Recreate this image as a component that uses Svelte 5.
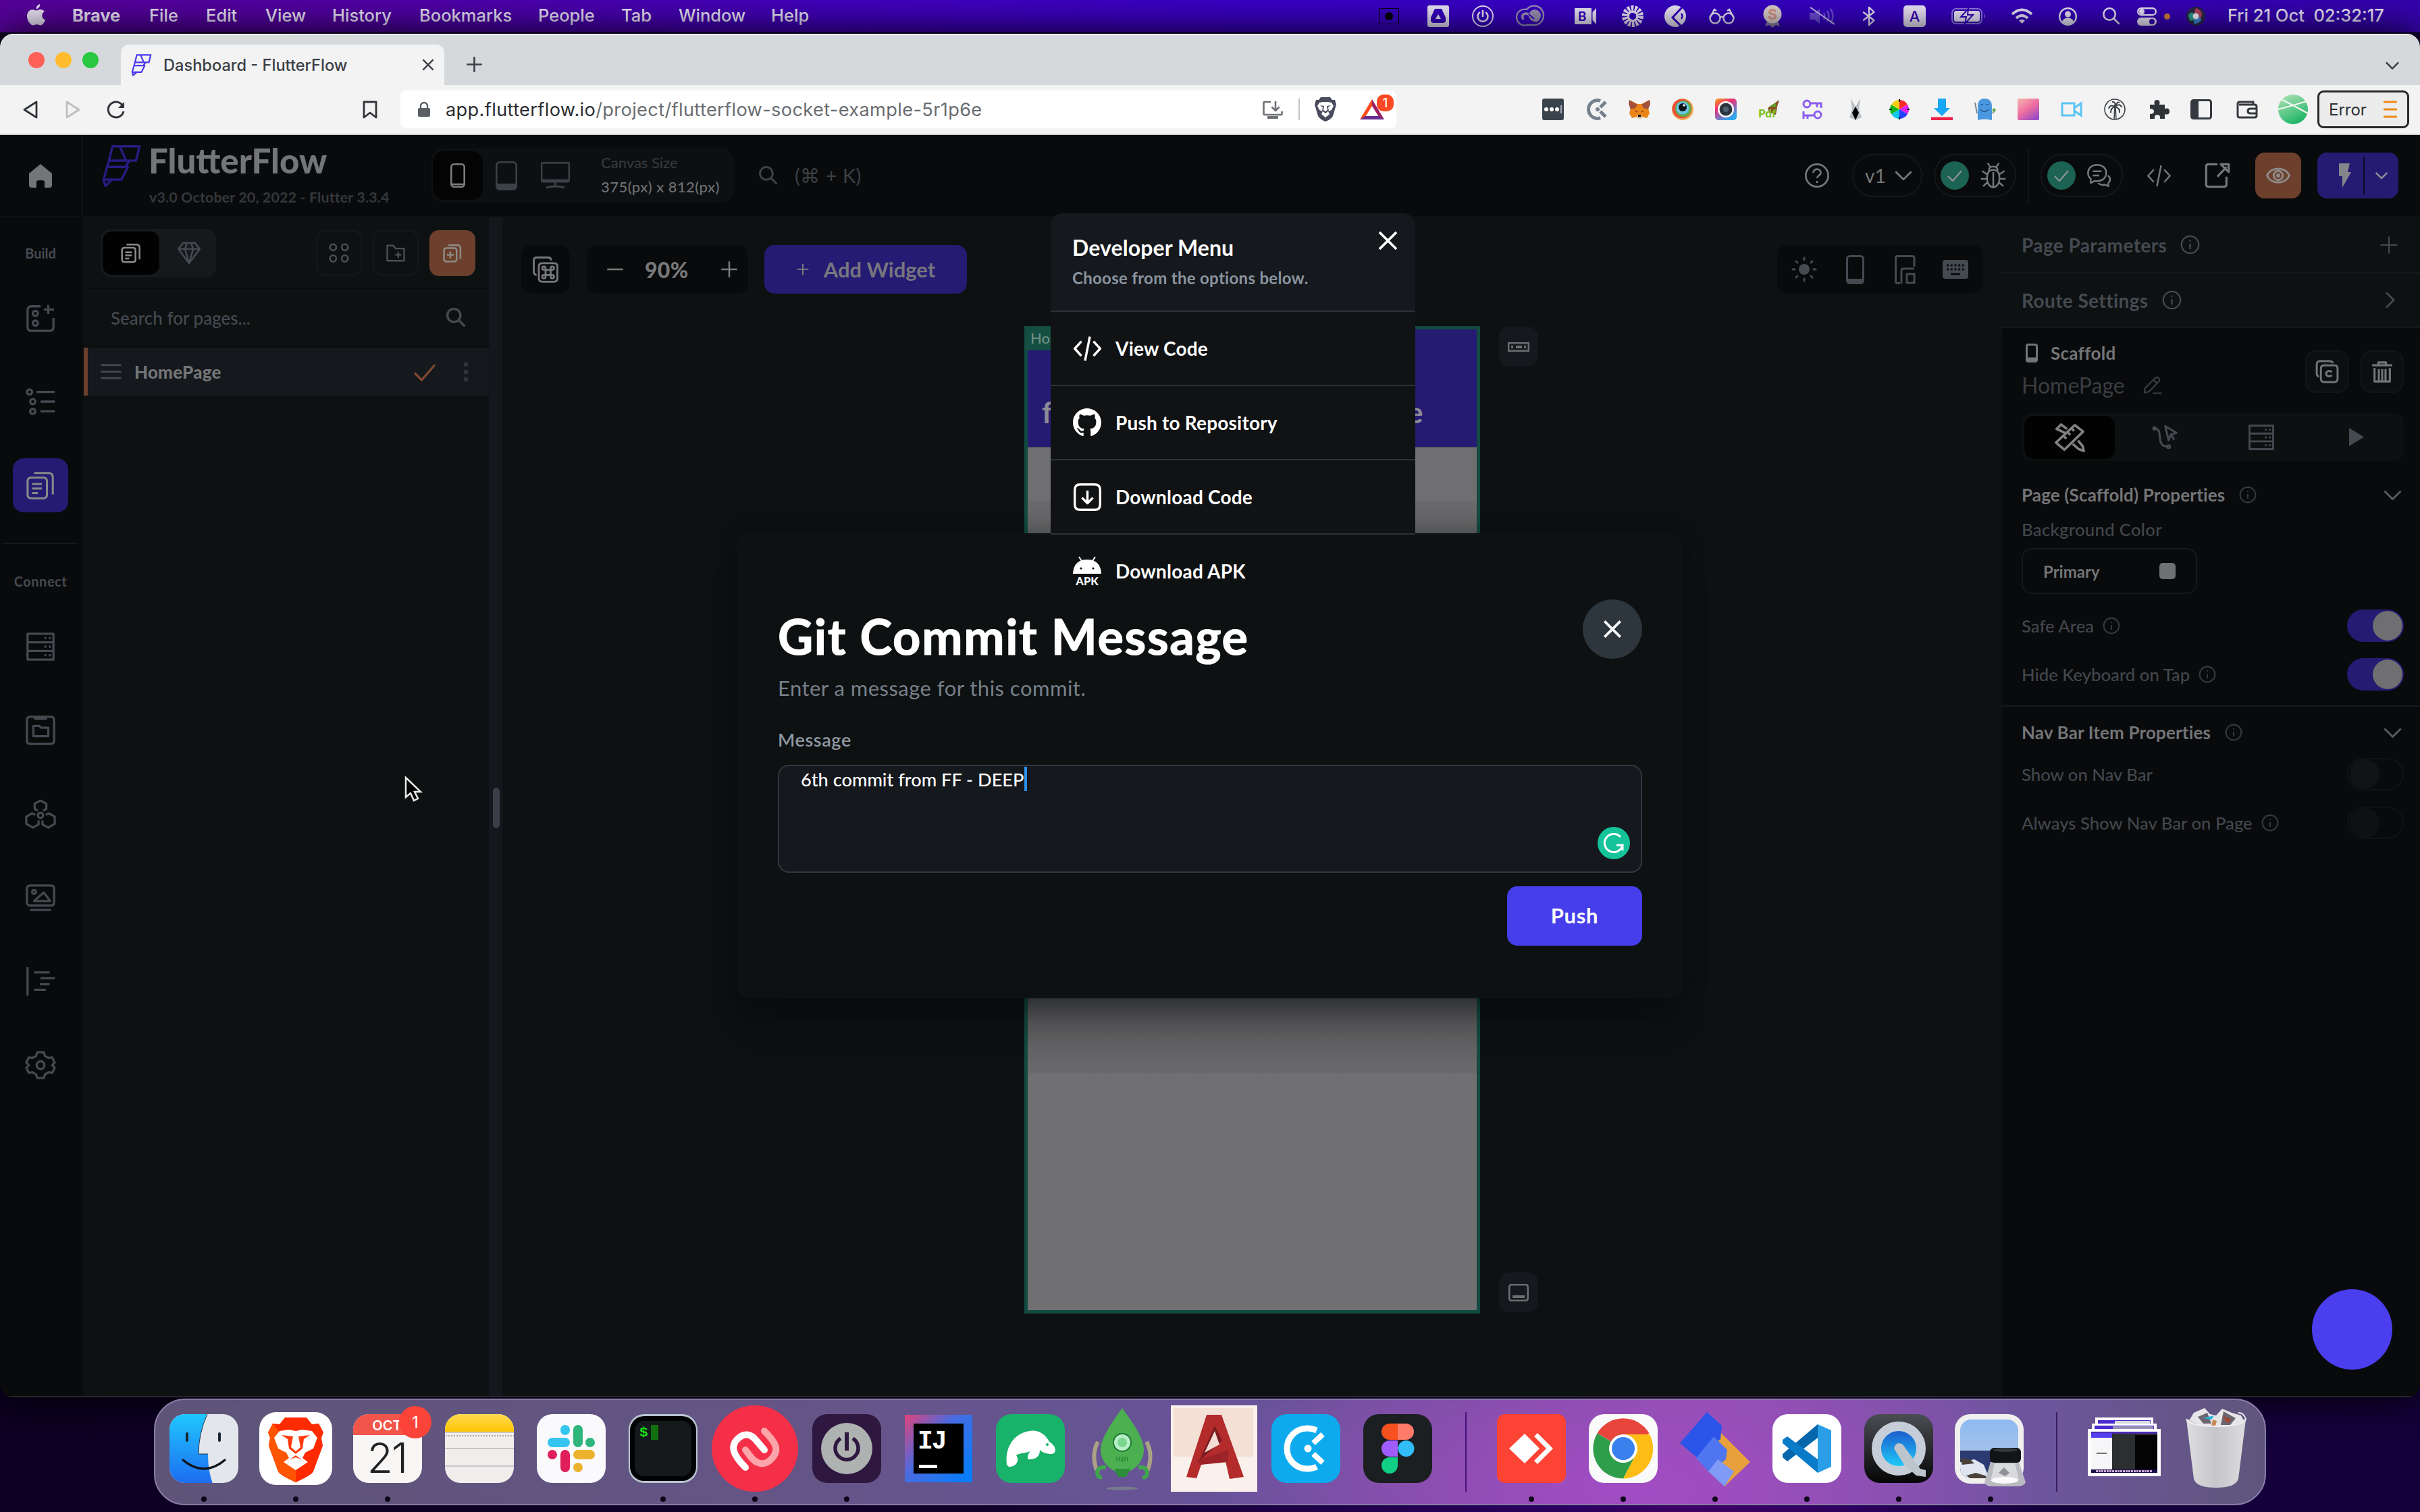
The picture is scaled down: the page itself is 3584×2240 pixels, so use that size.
<script>
  const menus = ['File', 'Edit', 'View', 'History', 'Bookmarks', 'People', 'Tab', 'Window', 'Help'];

  // Stroke icons on a 24 x 24 grid.
  const strokes = {
    close: 'M5 5L19 19M19 5L5 19',
    plus: 'M12 2V22M2 12H22',
    minus: 'M2 12H22',
    down: 'M2 7L12 17L22 7',
    right: 'M7 2L17 12L7 22',
    check: 'M2 13L9 20L22 5',
    search: 'M9.5 2A7.5 7.5 0 1 0 9.5 17A7.5 7.5 0 1 0 9.5 2M15 15L22 22',
    info: 'M12 1.5A10.5 10.5 0 1 0 12 22.5A10.5 10.5 0 1 0 12 1.5M12 11V17.5M12 6.5V8',
    help: 'M12 1.5A10.5 10.5 0 1 0 12 22.5A10.5 10.5 0 1 0 12 1.5M8.5 9.5C8.5 5 15.5 5 15.5 9.5C15.5 12 12 12 12 14.5M12 17V19',
    code: 'M7 6L1.5 12L7 18M17 6L22.500 12L17 18M14 2L10 22',
    burger: 'M1 5H23M1 12H23M1 19H23',
    pages: 'M4 6H14Q17 6 17 9V19Q17 22 14 22H5Q2 22 2 19V9Q2 6 5 6M7 2.500H18Q21.500 2.500 21.500 6V19M5.500 11H13M5.500 14.500H13M5.500 18H10',
    gem: 'M6 2H18L22.500 8L12 22L1.500 8ZM1.500 8H22.500M8 8L12 22L16 8L14 2M10 2L8 8',
    grid: 'M5.500 2A3.500 3.500 0 1 0 5.500 9A3.500 3.500 0 1 0 5.500 2M18.500 2A3.500 3.500 0 1 0 18.500 9A3.500 3.500 0 1 0 18.500 2M5.500 14.500A3.500 3.500 0 1 0 5.500 21.500A3.500 3.500 0 1 0 5.500 14.500M18.500 14.500A3.500 3.500 0 1 0 18.500 21.500A3.500 3.500 0 1 0 18.500 14.500',
    folderAdd: 'M2 3H9L12 6.500H22V21H2ZM15 10.500V17.500M11.500 14H18.500',
    pageAdd: 'M5 6H14Q17 6 17 9V19Q17 22 14 22H5Q2 22 2 19V9Q2 6 5 6M7 2.500H18Q21.500 2.500 21.500 6V19M9.500 10V18M5.500 14H13.500',
    widget: 'M12 3H5Q2 3 2 6V19Q2 22 5 22H19Q22 22 22 19V12M18 2V9M14.500 5.500H22.500M8 6.500A2 2 0 1 0 8 10.500A2 2 0 1 0 8 6.500M8 14A2 2 0 1 0 8 18A2 2 0 1 0 8 14',
    tree: 'M9 4.500H23M12 12H23M12 19.500H23M3.500 2.500A2 2 0 1 0 3.500 6.500A2 2 0 1 0 3.500 2.500M6 10A2 2 0 1 0 6 14A2 2 0 1 0 6 10M6 17.500A2 2 0 1 0 6 21.500A2 2 0 1 0 6 17.500',
    db: 'M2 2H22V22H2ZM2 8.700H22M2 15.300H22M15 5.300H16.500M18.500 5.300H20M15 12H16.500M18.500 12H20M15 18.600H16.500M18.500 18.600H20',
    folderBox: 'M4 1.500H20Q22.500 1.500 22.500 4V20Q22.500 22.500 20 22.500H4Q1.500 22.500 1.500 20V4Q1.500 1.500 4 1.500M7 3H17M6.500 8.500H11L12.500 10H18V16.500H6.500Z',
    hex: 'M12 1.500L16.500 4V8L14 9.500M10 9.500L7.500 8V4L12 1.500M8 12.500L5.500 11.500L1 14V19.500L6 22.500L10.500 20V17M16 12.500L18.500 11.500L23 14V19.500L18 22.500L13.500 20V17M12 11A2 2 0 1 0 12 15A2 2 0 1 0 12 11',
    image: 'M4 2.500H20Q22.500 2.500 22.500 5V15.500Q22.500 18 20 18H4Q1.500 18 1.500 15.500V5Q1.500 2.500 4 2.500M4 21.500H20M7 14.500L14.500 8L19.500 14.500ZM7 6A1.500 1.500 0 1 0 7 9A1.500 1.500 0 1 0 7 6',
    align: 'M2 1V23M7 5H19M12 9.500H23M11.500 14H19M7 18.500H16',
    gear: 'M9.500 2H14.500L15.500 5L18.500 6.500L21 6L23 10L21 12L23 14L21 18L18.500 17.500L15.500 19L14.500 22H9.500L8.500 19L5.500 17.500L3 18L1 14L3 12L1 10L3 6L5.500 6.500L8.500 5ZM12 9A3 3 0 1 0 12 15A3 3 0 1 0 12 9',
    bug: 'M12 7C7 7 6.500 11 6.500 15C6.500 19 9 22.500 12 22.500C15 22.500 17.500 19 17.500 15C17.500 11 17 7 12 7M12 9V22M8 7.500Q8 4 12 4Q16 4 16 7.500M9 4L7 1M15 4L17 1M6.500 11L2 8M17.500 11L22 8M6.500 15H1M17.500 15H23M7 18L3 21.500M17 18L21 21.500',
    chat: 'M10 2C4 2 1.500 6 1.500 9.500C1.500 12 2.500 14 4 15V19L8 17C15 18 18.500 14 18.500 9.500C18.500 5 15 2 10 2M6 8H14M6 12H12M20 12C23 14 22.500 17.500 20.500 19V22L17 20.500C14 21.500 12 20 11 19',
    copy: 'M8 6H19Q22 6 22 9V19Q22 22 19 22H9Q6 22 6 19V9Q6 6 9 6M4 17Q2 16 2 14V5Q2 2 5 2H14Q17 2 17.500 4M16.500 12.500C14.500 10.500 11 11.500 11 14C11 16.500 14.500 17.500 16.500 15.500',
    trash: 'M1.500 5H22.500M8 4V2H16V4M4 8V22H20V8M8.500 9V21M12 9V21M15.500 9V21',
    pencil: 'M2 21.500L3 16L15 4Q17 2.500 19 4Q21 6 19.500 8L8 20L2 21.500M12 22H23M13 6L17.500 10.500',
    design: 'M1.500 16L16 2.500L22.500 7.500L8 21.500ZM13.500 5L15.500 7M10.500 8L12.500 10M7.500 11L9.500 13M8.500 8.500L2 5.500L5.500 2L10 5.500M14.500 17L19 21L23 22.500L22 18.500L18.500 14.500',
    flow: 'M3.500 4C12 4 4 20 14.500 20M13 2L23 8L18 9.500L16 14.500ZM18.500 10L21 14M3.500 3A1 1 0 1 0 3.500 5A1 1 0 1 0 3.500 3M16 19A1.200 1.200 0 1 0 16 21.500A1.200 1.200 0 1 0 16 19',
    cmd: 'M9 6.500H19.500Q22.500 6.500 22.500 9.500V20Q22.500 23 19.500 23H9Q6 23 6 20V9.500Q6 6.500 9 6.500M4 17Q1.500 17 1.500 14V4Q1.500 1.500 4 1.500H14Q17 1.500 17 4M12 12.500H16.500V17H12ZM12 12.500V11A1.500 1.500 0 1 0 10.500 12.500ZM16.500 12.500H18A1.500 1.500 0 1 0 16.500 11ZM12 17H10.500A1.500 1.500 0 1 0 12 18.500ZM16.500 17V18.500A1.500 1.500 0 1 0 18 17Z',
    external: 'M12 2H4Q2 2 2 4V20Q2 22 4 22H18Q20 22 20 20V13M12 13L20 4.500M15 2H22V9Z',
    download: 'M6 1.500H18Q22.500 1.500 22.500 6V18Q22.500 22.500 18 22.500H6Q1.500 22.500 1.500 18V6Q1.500 1.500 6 1.500M12 6.500V17M7.500 12.500L12 17L16.500 12.500',
    eye: 'M1 12C5 3 19 3 23 12C19 21 5 21 1 12ZM12 7.500A4.500 4.500 0 1 0 12 16.500A4.500 4.500 0 1 0 12 7.500M12 11A1 1 0 1 0 12 13A1 1 0 1 0 12 11',
    flutter: 'M7 1H22L20 9H5ZM11 1L14.500 9M5 9L4 12.500H14L16.500 9M4 12.500L2 19.500H12L15.500 12.500ZM2 19.500L3 23L7 19.500',
    bluetooth: 'M5 7L18 17L12 22.500V1.500L18 7L5 17'
  };

  const railBuild = ['widget', 'tree'];
  const railConnect = ['db', 'folderBox', 'hex', 'image', 'align', 'gear'];

  const devItems = [
    { icon: 'code', label: 'View Code' },
    { icon: 'github', label: 'Push to Repository' },
    { icon: 'download', label: 'Download Code' },
    { icon: 'apk', label: 'Download APK' }
  ];

  const dockLeft = [
    ['finder', true], ['brave', true], ['calendar', true], ['notes', false], ['slack', false],
    ['terminal', true], ['authy', true], ['power', true], ['intellij', false], ['tableplus', false],
    ['rocket', false], ['autocad', false], ['clockify', false], ['figma', false]
  ];
  const dockMiddle = [
    ['anydesk', true], ['chrome', true], ['testflow', true], ['vscode', true], ['quicktime', true], ['preview', true]
  ];
  const dockRight = [['stack', false], ['trash', false]];

  let message = $state('6th commit from FF - DEEP');
</script>

{#snippet icon(name, size, width = 2)}
  <svg class="ic" width={size} height={size} viewBox="0 0 24 24" fill="none" stroke="currentColor" stroke-width={width} stroke-linejoin="round"><path d={strokes[name]} /></svg>
{/snippet}

{#snippet github()}
  <svg class="ic" width="42" height="42" viewBox="0 0 16 16" fill="currentColor"><path d="M8 0C3.580 0 0 3.580 0 8c0 3.540 2.290 6.530 5.470 7.590.4.070.550-.170.550-.380 0-.190-.010-.820-.010-1.490-2.010.370-2.530-.490-2.690-.940-.090-.230-.480-.940-.820-1.130-.280-.150-.680-.520-.010-.530.630-.010 1.080.580 1.230.820.720 1.210 1.870.870 2.330.660.070-.520.280-.870.510-1.070-1.780-.2-3.640-.890-3.640-3.950 0-.870.310-1.590.820-2.150-.080-.2-.360-1.020.080-2.120 0 0 .670-.210 2.200.820.640-.180 1.320-.270 2-.270s1.360.090 2 .270c1.530-1.040 2.200-.820 2.200-.820.440 1.100.160 1.920.080 2.120.510.560.820 1.270.820 2.150 0 3.070-1.870 3.750-3.650 3.950.290.250.540.730.540 1.480 0 1.070-.010 1.930-.010 2.200 0 .210.150.460.550.380A8.010 8.010 0 0 0 16 8c0-4.420-3.580-8-8-8z" /></svg>
{/snippet}

{#snippet apk()}
  <svg class="ic" width="42" height="44" viewBox="0 0 42 44">
    <path d="M13 7L9 1M29 7L33 1" fill="none" stroke="#fff" stroke-width="2" />
    <path d="M0 26Q1 5 21 5Q41 5 42 26Z" fill="#fff" /><circle cx="12" cy="18" r="1.600" fill="#111" /><circle cx="30" cy="18" r="1.600" fill="#111" />
    <text x="21" y="43" text-anchor="middle" font-family="Lato, sans-serif" font-weight="900" font-size="16.500" fill="#fff">APK</text>
  </svg>
{/snippet}

{#snippet dockIcon(name)}
  {#if name === 'finder'}
    <svg width="104" height="104" viewBox="0 0 104 104"><defs><linearGradient id="fb" x1="0" y1="0" x2="0" y2="1"><stop offset="0" stop-color="#1fc8fd" /><stop offset="1" stop-color="#1d6cf2" /></linearGradient><clipPath id="fc"><rect x="1" y="1" width="102" height="102" rx="23" /></clipPath></defs><g clip-path="url(#fc)"><rect width="104" height="104" fill="#e3e7ec" /><path d="M57 0Q44 30 44 60H58Q58 85 65 104H0V0Z" fill="url(#fb)" /></g><path d="M27 30V40M75 30V40" stroke="#1a2533" stroke-width="4" stroke-linecap="round" /><path d="M57 1Q44 30 44 60H58" fill="none" stroke="#25364b" stroke-width="1" /><path d="M21 69Q52 95 83 69" fill="none" stroke="#10151c" stroke-width="3.500" stroke-linecap="round" /></svg>
  {:else if name === 'brave'}
    <svg width="108" height="108" viewBox="0 0 108 108"><rect width="108" height="108" rx="25" fill="#fff" /><path d="M38 8H70L78 18L88 17L95 30L92 38L94 50L80 88Q78 93 54 104Q30 93 28 88L14 50L16 38L13 30L20 17L30 18Z" fill="#ff2a00" /><path d="M54 104Q30 93 28 88L14 50L16 38L13 30L20 17L54 60Z" fill="#ff5500" /><path d="M30 28L44 26L54 28L64 26L78 28L86 38L80 54L68 60L64 68L72 74L54 86L36 74L44 68L40 60L28 54L22 38Z" fill="#fff" /><path d="M33 34L50 36L47 52L54 58L61 52L58 36L75 34L66 40L64 54L54 62L44 54L42 40ZM40 74L54 64L68 74L62 70L54 67L46 70Z" fill="#ff3a0c" /></svg>
  {:else if name === 'calendar'}
    <svg width="104" height="104" viewBox="0 0 104 104"><defs><clipPath id="cc"><rect x="1" y="1" width="102" height="102" rx="23" /></clipPath></defs><g clip-path="url(#cc)"><rect width="104" height="104" fill="#f7f6f5" /><rect width="104" height="32" fill="#f25549" /></g><text x="51" y="25" text-anchor="middle" font-family="Inter, sans-serif" font-weight="600" font-size="20" fill="#fff">OCT</text><text x="51" y="88" text-anchor="middle" font-family="Inter, sans-serif" font-weight="300" font-size="62" letter-spacing="-2" fill="#222">21</text></svg>
    <span class="badge">1</span>
  {:else if name === 'notes'}
    <svg width="104" height="104" viewBox="0 0 104 104"><defs><clipPath id="nc"><rect x="1" y="1" width="102" height="102" rx="23" /></clipPath><linearGradient id="ny" x1="0" y1="0" x2="0" y2="1"><stop offset="0" stop-color="#ffdc55" /><stop offset="1" stop-color="#fdc400" /></linearGradient></defs><g clip-path="url(#nc)"><rect width="104" height="104" fill="#f0eeec" /><rect width="104" height="27" fill="url(#ny)" /><path d="M0 28H104M0 52H104M0 78H104" stroke="#c8c6c6" stroke-width="2" /><path d="M2 33H104" stroke="#a9a49e" stroke-width="2" stroke-dasharray="2 2" /></g></svg>
  {:else if name === 'slack'}
    <svg width="104" height="104" viewBox="0 0 104 104"><rect x="1" y="1" width="102" height="102" rx="23" fill="#fafafc" /><g stroke-width="14" stroke-linecap="round" fill="none"><path d="M24 43H43M43 24V25" stroke="#36c5f0" /><path d="M62 24V43M80 43V43.100" stroke="#2eb67d" /><path d="M62 61H80M62 80V80.100" stroke="#ecb22e" /><path d="M43 61V80M24 61V61.100" stroke="#e01e5a" /></g></svg>
  {:else if name === 'terminal'}
    <svg width="104" height="104" viewBox="0 0 104 104"><rect x="1" y="1" width="102" height="102" rx="23" fill="#b9c4cf" /><rect x="3" y="4" width="98" height="96" rx="21" fill="#020203" /><rect x="10" y="11" width="84" height="82" rx="14" fill="#15191b" /><text x="17" y="34" font-family="Liberation Mono, monospace" font-weight="700" font-size="21" fill="#12e012">$</text><rect x="34" y="17" width="11" height="22" fill="#11700f" /></svg>
  {:else if name === 'authy'}
    <svg width="128" height="128" viewBox="0 0 128 128"><circle cx="64" cy="64" r="64" fill="#f52f48" /><path d="M78 38C98 58 100 68 88 80C78 90 66 88 56 74L50 66" fill="none" stroke="#fba4aa" stroke-width="10" stroke-linecap="round" /><path d="M50 92C30 72 28 60 38 50C48 40 58 42 66 52L78 66" fill="none" stroke="#fff" stroke-width="10" stroke-linecap="round" /></svg>
  {:else if name === 'power'}
    <svg width="102" height="102" viewBox="0 0 102 102"><rect width="102" height="102" rx="22" fill="#2f1840" /><circle cx="51" cy="51" r="38" fill="#aeb2b1" /><path d="M51 27V54" stroke="#2f1840" stroke-width="6" /><path d="M42 36A17 17 0 1 0 60 36" fill="none" stroke="#2f1840" stroke-width="5.500" /></svg>
  {:else if name === 'intellij'}
    <svg width="100" height="100" viewBox="0 0 100 100"><defs><linearGradient id="ij" x1="0" y1="0" x2="1" y2=".8"><stop offset="0" stop-color="#e0447a" /><stop offset=".45" stop-color="#4a6be0" /><stop offset="1" stop-color="#087cfa" /></linearGradient></defs><rect width="100" height="100" fill="url(#ij)" /><rect x="13" y="13" width="74" height="74" fill="#000" /><text x="19" y="50" font-family="Liberation Mono, monospace" font-weight="700" font-size="38" letter-spacing="-2" fill="#fff">IJ</text><rect x="21" y="74" width="27" height="5" fill="#fff" /></svg>
  {:else if name === 'tableplus'}
    <svg width="104" height="104" viewBox="0 0 104 104"><rect x="1" y="1" width="102" height="102" rx="23" fill="#19b26b" /><path d="M17 76C14 52 26 32 46 27C62 22 74 30 80 42C90 48 92 58 84 60C76 60 70 58 66 54C66 64 60 68 50 68C46 68 48 60 52 56C42 60 36 58 31 62C37 70 30 80 20 79Z" fill="#fff" /><circle cx="77" cy="46" r="2" fill="#19b26b" /></svg>
  {:else if name === 'rocket'}
    <svg width="92" height="124" viewBox="0 0 92 124"><path d="M10 52Q0 70 8 94M82 52Q92 70 84 94" fill="none" stroke="#aaa283" stroke-width="6" /><path d="M46 2C24 32 14 50 14 64C14 82 30 98 46 98C62 98 78 82 78 64C78 50 68 32 46 2Z" fill="#4caf50" /><path d="M34 92H58L52 104H40Z" fill="#2c8e3b" /><circle cx="46" cy="53" r="13" fill="#b9efc6" stroke="#1c7a36" stroke-width="2" /><circle cx="46" cy="53" r="7" fill="#7ad68f" /><path d="M38 74V80M42 74V81M46 74V82M50 74V81M54 74V80" stroke="#2c8e3b" stroke-width="2" /><path d="M22 90Q10 88 9 98Q10 106 16 104M70 90Q82 88 83 98Q82 106 76 104" fill="none" stroke="#3fa64d" stroke-width="6" /><ellipse cx="46" cy="121" rx="24" ry="2.500" fill="#77798c" /></svg>
  {:else if name === 'autocad'}
    <svg width="128" height="128" viewBox="0 0 128 128"><rect width="128" height="128" fill="#faf0ec" /><path d="M4 4H122V76H4Z" fill="#f5e0d6" /><path d="M53 14H75L108 106L87 109L80 79L45 88L38 108L23 106Z" fill="#b42b2c" /><path d="M65 30L42 82L76 52Z" fill="#7c1c22" /><path d="M65 38L50 70L72 58Z" fill="#f2ddd4" /><path d="M38 82L86 66L84 84L44 88Z" fill="#9c2327" /></svg>
  {:else if name === 'clockify'}
    <svg width="104" height="104" viewBox="0 0 104 104"><rect x="1" y="1" width="102" height="102" rx="23" fill="#0dabee" /><path d="M68 25Q60 22 54 22A30 30 0 0 0 54 82Q62 82 68 79" fill="none" stroke="#fff" stroke-width="9" /><circle cx="55" cy="52" r="5.500" fill="#fff" /><path d="M63 44L77 31M63 60L77 73" stroke="#fff" stroke-width="8" /></svg>
  {:else if name === 'figma'}
    <svg width="104" height="104" viewBox="0 0 104 104"><rect x="1" y="1" width="102" height="102" rx="23" fill="#1c1f21" /><path d="M52 15H40A12 12 0 0 0 40 39H52Z" fill="#f8501f" /><path d="M52 15H64A12 12 0 0 1 64 39H52Z" fill="#ff7a68" /><path d="M52 40H40A12 12 0 0 0 40 64H52Z" fill="#a15cff" /><circle cx="64.500" cy="52" r="12" fill="#32bcf8" /><path d="M52 65H40A12 12 0 1 0 52 77Z" fill="#10ce83" /></svg>
  {:else if name === 'anydesk'}
    <svg width="102" height="102" viewBox="0 0 102 102"><rect width="102" height="102" rx="12" fill="#fd4334" /><path d="M41 29L63 51L41 73L18 51Z" fill="#fff" /><path d="M55 33L60 28L83 51L60 74L55 69L73 51Z" fill="#fff" /></svg>
  {:else if name === 'chrome'}
    <svg width="104" height="104" viewBox="0 0 104 104"><rect x="1" y="1" width="102" height="102" rx="23" fill="#fafafa" /><path d="M52 52L13.500 29.500A44.500 44.500 0 0 1 90.500 29.500Z" fill="#e8453c" /><path d="M33 41L13.500 29.500A44.500 44.500 0 0 0 52 96.500L70 62Z" fill="#2f9e4a" /><path d="M52 31H91A44.500 44.500 0 0 1 52 96.500L70 62Z" fill="#fdbd14" /><circle cx="52" cy="52" r="21" fill="#fff" /><circle cx="52" cy="52" r="17" fill="#3a81ee" /></svg>
  {:else if name === 'testflow'}
    <svg width="104" height="112" viewBox="0 0 104 112"><path d="M58 30L104 76L66 112L44 90Z" fill="#e8a03c" /><path d="M40 2L62 22L60 42L26 70L0 48Z" fill="#2b55e8" /><path d="M50 38L70 58L68 72L44 92L24 70Z" fill="#4f76f0" /><path d="M56 72L80 90L66 112L42 90Z" fill="#7f9bf5" /></svg>
  {:else if name === 'vscode'}
    <svg width="104" height="104" viewBox="0 0 104 104"><rect x="1" y="1" width="102" height="102" rx="23" fill="#fff" /><path d="M68 16V36L23 71L16 65V60Z" fill="#0566ab" /><path d="M68 88L16 44V39L23 34L68 68Z" fill="#0a7bc9" /><path d="M68 16L88 25V79L68 88Z" fill="#2a9fe8" /></svg>
  {:else if name === 'quicktime'}
    <svg width="104" height="104" viewBox="0 0 104 104"><defs><linearGradient id="qb" x1="0" y1="0" x2="0" y2="1"><stop offset="0" stop-color="#4a4d52" /><stop offset="1" stop-color="#060607" /></linearGradient><linearGradient id="qi" x1="0" y1="0" x2="0" y2="1"><stop offset="0" stop-color="#1b50c8" /><stop offset="1" stop-color="#20d8ff" /></linearGradient></defs><rect x="1" y="1" width="102" height="102" rx="23" fill="url(#qb)" /><circle cx="52" cy="52" r="33" fill="url(#qi)" stroke="#c5ced8" stroke-width="14" /><path d="M45 52Q48 40 58 46L84 82L92 84V94L78 92L60 76Z" fill="#bcc4cc" /></svg>
  {:else if name === 'preview'}
    <svg width="108" height="112" viewBox="0 0 108 112"><defs><linearGradient id="sky" x1="0" y1="0" x2="0" y2="1"><stop offset="0" stop-color="#8db9f2" /><stop offset="1" stop-color="#b7c8e2" /></linearGradient></defs><rect x="1" y="5" width="102" height="103" rx="23" fill="#f1f0ee" /><rect x="9" y="13" width="86" height="87" rx="16" fill="url(#sky)" /><path d="M9 59H95V100H24Q9 98 9 84Z" fill="#2c3a72" /><path d="M9 76L30 72L44 80L52 100H24Q9 98 9 84Z" fill="#dfe6f2" /><path d="M9 70L24 72L30 78L12 80ZM18 96L32 92L46 96L50 100H24Z" fill="#4b4138" /><path d="M54 76H96L106 106Q104 112 92 112H58Q46 112 45 106Z" fill="#b9bbc0" /><path d="M60 78H90L96 102Q76 96 54 104Z" fill="#d9dadd" /><ellipse cx="75" cy="103" rx="20" ry="5" fill="#fafafa" /><path d="M66 92L74 84L82 92L76 97Z" fill="#8e9095" /><rect x="53" y="55" width="46" height="22" rx="6" fill="#131415" /><ellipse cx="76" cy="58" rx="18" ry="3" fill="#33363a" /></svg>
  {:else if name === 'stack'}
    <svg width="108" height="96" viewBox="0 0 108 96"><rect x="11" y="2" width="86" height="30" fill="#fff" /><rect x="15" y="6" width="78" height="6" fill="#4a2bd0" /><rect x="40" y="7" width="52" height="4" fill="#d9d9e0" /><rect x="6" y="11" width="96" height="30" fill="#fff" /><rect x="10" y="14" width="88" height="5" fill="#4a2bd0" /><rect x="37" y="15" width="60" height="4" fill="#9a93b8" /><rect y="19" width="108" height="70" fill="#fff" /><rect x="5" y="23" width="98" height="61" fill="#2c2e30" /><rect x="5" y="23" width="98" height="3" fill="#4a2bb0" /><rect x="5" y="27" width="31" height="52" fill="#f6f6f8" /><rect x="5" y="25" width="31" height="7" fill="#5540f0" /><path d="M13 55H28" stroke="#444" stroke-width="1.500" /><rect x="70" y="28" width="33" height="51" fill="#040404" /><rect x="5" y="79" width="98" height="5" fill="#1c0d48" /><path d="M12 81.500H96" stroke="#c8a7d0" stroke-width="3" stroke-dasharray="3 1" /></svg>
  {:else}
    <svg width="94" height="122" viewBox="0 0 94 122"><defs><linearGradient id="bin" x1="0" y1="0" x2="1" y2="0"><stop offset="0" stop-color="#dedde0" /><stop offset=".5" stop-color="#c6c5c9" /><stop offset="1" stop-color="#dcdbde" /></linearGradient></defs><path d="M3 18H91L80 106Q76 119 47 119Q18 119 14 106Z" fill="url(#bin)" /><path d="M8 18L14 8L30 1L38 10L47 12L56 2L70 8L84 12L88 20L70 27H24Z" fill="#e6e6e8" /><path d="M20 14L34 8L40 24H28ZM58 6L76 16L68 26H54Z" fill="#6b6670" /><path d="M28 16L44 12L40 18Z" fill="#25b2d8" /><path d="M56 12L70 18L64 24Z" fill="#a04438" /><path d="M42 18L48 20L46 28H40Z" fill="#c98a56" /><path d="M3 17Q6 28 47 28Q88 28 91 17Q88 8 80 8" fill="none" stroke="#efeff2" stroke-width="2" /></svg>
  {/if}
{/snippet}

{#snippet dockSlots(items)}
  {#each items as [name, running]}
    <div class="slot">
      {@render dockIcon(name)}
      {#if running}<i class="run"></i>{/if}
    </div>
  {/each}
{/snippet}

<div class="desktop">
  <header class="menubar">
    <div class="menus">
      <svg class="apple" width="27" height="32" viewBox="0 0 27 32" fill="#ece4f8"><path d="M19 0Q19.500 6 13.500 7.500Q13.500 2 19 0M13.800 9.500C16 9.500 17 8 20 8C22 8 24.500 9 26 11C20.500 14 21.500 21.500 27 23.500C25.500 28 22.500 31.500 20 31.500C18 31.500 17 30.300 14.500 30.300C12 30.300 11 31.500 9 31.500C5 31.500 0 24 0 18C0 12 4 8.200 8 8.200C10.500 8.200 12 9.500 13.800 9.500" /></svg>
      <b>Brave</b>
      {#each menus as m}<span>{m}</span>{/each}
    </div>
    <div class="status">
      <svg width="30" height="24" viewBox="0 0 30 24"><rect x="0.500" y="0.500" width="29" height="23" rx="1" fill="none" stroke="#05001c" stroke-width="1.200" /><circle cx="15" cy="12" r="6" fill="#000" /></svg>
      <svg width="32" height="32" viewBox="0 0 32 32"><rect width="32" height="32" rx="3" fill="#ece6fa" /><path d="M11 5H21L27 18V24L24 26H8L5 24V18Z" fill="#3700c4" /><path d="M16 13L20 20H12Z" fill="#ece6fa" /></svg>
      <svg width="32" height="32" viewBox="0 0 32 32" fill="none" stroke="#ece6fa" stroke-width="2"><circle cx="16" cy="16" r="15" /><path d="M16 7V17M12 10A7.500 7.500 0 1 0 20 10" stroke-width="2.600" /></svg>
      <svg width="40" height="30" viewBox="0 0 40 30" fill="none"><path d="M14 28A12 12 0 1 1 13 5A14 14 0 0 1 38 14A14 14 0 0 1 25 28Z" stroke="#9b92b8" stroke-width="2.400" /><circle cx="25" cy="14" r="9" fill="#9b92b8" /><path d="M8 20Q4 12 12 11Q15 11 18 15L24 21Q28 23 30 20" stroke="#9b92b8" stroke-width="3.500" /><path d="M16 12L24 19" stroke="#3700c4" stroke-width="2" /></svg>
      <svg width="34" height="26" viewBox="0 0 34 26"><rect y="1" width="25" height="24" rx="1" fill="#ece6fa" /><path d="M26.500 7L32 1V25L26.500 19Z" fill="#ece6fa" /><text x="5" y="19.500" font-family="Inter, sans-serif" font-weight="600" font-size="19" fill="#3700c4">B</text></svg>
      <svg width="32" height="32" viewBox="0 0 32 32" fill="none"><circle cx="16" cy="16" r="10.500" stroke="#ece6fa" stroke-dasharray="3.200 1.512" stroke-width="11" /><circle cx="16" cy="16" r="7" stroke="#ece6fa" stroke-width="3" /></svg>
      <svg width="32" height="32" viewBox="0 0 32 32"><circle cx="16" cy="16" r="16" fill="#ece6fa" /><path d="M26 3L12 18L24 30" fill="none" stroke="#3700c4" stroke-width="3" /><path d="M25 12Q28 16 25 20" fill="none" stroke="#3700c4" stroke-width="2.400" /></svg>
      <svg width="38" height="24" viewBox="0 0 38 24" fill="none" stroke="#ece6fa" stroke-width="2.400"><circle cx="9" cy="15" r="7.500" /><circle cx="29" cy="15" r="7.500" /><path d="M16.500 14Q19 11.500 21.500 14M1.500 14L8 2L11 4M36.500 14L30 2L27 4" /></svg>
      <svg width="30" height="34" viewBox="0 0 30 34"><path d="M8 22L4 32L10 30L15 34L20 30L26 32L22 22Z" fill="#8e86a8" /><circle cx="15" cy="14" r="13.500" fill="#dcd2d0" /><text x="15" y="22" text-anchor="middle" font-family="Inter, sans-serif" font-weight="800" font-size="21" fill="#d69a8a">S</text></svg>
      <svg width="40" height="28" viewBox="0 0 40 28"><path d="M1 9H8L16 3V25L8 19H1Z" fill="#6b4bd6" /><path d="M22 9Q25 14 22 19M27 6Q32 14 27 22M32 3Q39 14 32 25" fill="none" stroke="#6b4bd6" stroke-width="2.500" /><path d="M2 1L38 26" stroke="#cfc4f0" stroke-width="2" /></svg>
      <span class="bt">{@render icon('bluetooth', 30, 1.800)}</span>
      <svg width="33" height="32" viewBox="0 0 33 32"><rect width="33" height="32" rx="5" fill="#ece6fa" /><text x="16.500" y="24" text-anchor="middle" font-family="Inter, sans-serif" font-weight="500" font-size="22" fill="#3700b8">A</text></svg>
      <svg width="51" height="24" viewBox="0 0 51 24"><rect x="1" y="1" width="44" height="22" rx="6" fill="none" stroke="#8f77e2" stroke-width="2" /><rect x="4" y="4" width="38" height="16" rx="3" fill="#ece6fa" /><path d="M48 8Q51 12 48 16Z" fill="#8f77e2" /><path d="M25 1L14 13H22L20 23L32 10H24Z" fill="#ece6fa" stroke="#3400b8" stroke-width="2" /></svg>
      <svg width="33" height="24" viewBox="0 0 33 24" fill="none" stroke="#ece6fa" stroke-width="4"><path d="M2 9Q16.500 -4 31 9M8 15Q16.500 7 25 15" /><path d="M12 18.500Q16.500 15 21 18.500L16.500 23Z" fill="#ece6fa" stroke="none" /></svg>
      <svg width="27" height="27" viewBox="0 0 27 27"><circle cx="13.500" cy="13.500" r="12.300" fill="none" stroke="#ece6fa" stroke-width="2.400" /><circle cx="13.500" cy="10" r="4.500" fill="#ece6fa" /><path d="M5 21Q7 15.500 13.500 15.500Q20 15.500 22 21Q18 25 13.500 25Q9 25 5 21" fill="#ece6fa" /></svg>
      <span>{@render icon('search', 28, 2.200)}</span>
      <svg width="29" height="27" viewBox="0 0 29 27"><rect x="1.200" y="1.200" width="26.600" height="10" rx="5" fill="none" stroke="#ece6fa" stroke-width="2.400" /><circle cx="7" cy="6.200" r="4" fill="#ece6fa" /><rect y="15" width="29" height="12" rx="6" fill="#ece6fa" /><circle cx="22" cy="21" r="4" fill="#3400b8" /></svg>
      <svg width="9" height="9" viewBox="0 0 8 8"><circle cx="4" cy="4" r="4" fill="#d9803c" /></svg>
      <svg width="28" height="28" viewBox="0 0 28 28"><circle cx="14" cy="14" r="14" fill="#2b2748" /><path d="M14 2Q26 6 22 16Q17 16 14 14Q10 9 14 2" fill="#b0405e" /><path d="M3 12Q8 4 14 14Q12 22 6 21Q3 17 3 12" fill="#2b9a8f" /><path d="M14 14Q22 14 22 20Q17 26 11 25Q10 20 14 14" fill="#3f86d8" /><circle cx="14" cy="14" r="4.500" fill="#f3f3fa" /></svg>
      <time>Fri 21 Oct&nbsp; 02:32:17</time>
    </div>
  </header>

  <main class="window">
    <div class="tabstrip">
      <div class="lights"><i class="red"></i><i class="yellow"></i><i class="green"></i></div>
      <div class="tab">
        <span class="fav">{@render icon('flutter', 33, 1.600)}</span>
        <span class="tabtitle">Dashboard - FlutterFlow</span>
        {@render icon('close', 26, 2.200)}
      </div>
      <span class="newtab">{@render icon('plus', 27, 2.400)}</span>
      <span class="tabsearch">{@render icon('down', 22, 2.800)}</span>
    </div>

    <div class="toolbar">
      <div class="nav">
        <svg width="22" height="27" viewBox="0 0 22 27" fill="none" stroke="#30343a" stroke-width="2.800" stroke-linejoin="round"><path d="M20 2V25L2 13.500Z" /></svg>
        <svg width="22" height="27" viewBox="0 0 22 27" fill="none" stroke="#bcbfc2" stroke-width="2.800" stroke-linejoin="round"><path d="M2 2V25L20 13.500Z" /></svg>
        <svg width="28" height="27" viewBox="0 0 28 27" fill="none" stroke="#30343a" stroke-width="3"><path d="M25 16A11.500 11.500 0 1 1 23 6.500" /><path d="M26 2V11H17Z" fill="#30343a" stroke="none" /></svg>
        <svg width="22" height="27" viewBox="0 0 22 27" fill="none" stroke="#30343a" stroke-width="2.800" stroke-linejoin="round"><path d="M2 2H20V25L11 18L2 25Z" /></svg>
      </div>
      <div class="address">
        <svg width="18" height="22" viewBox="0 0 18 22"><rect y="9" width="18" height="13" rx="2" fill="#5b5f63" /><path d="M4 10V6A5 5 0 0 1 14 6V10" fill="none" stroke="#5b5f63" stroke-width="2.400" /></svg>
        <span class="url"><em>app.flutterflow.io</em>/project/flutterflow-socket-example-5r1p6e</span>
        <div class="addricons">
          <svg width="30" height="27" viewBox="0 0 30 27" fill="none" stroke="#6c6f73" stroke-width="2.600"><path d="M12 2H3Q1.500 2 1.500 4V19Q1.500 21 3 21H27Q28.500 21 28.500 19V16M19 1V15M13.500 9.500L19 15L24.500 9.500" /><path d="M7 25H23" stroke-width="4" /></svg>
          <i class="vline"></i>
          <svg width="32" height="36" viewBox="0 0 32 36"><path d="M9 0H23L26 4L30 4L32 11L27 28Q24 33 16 36Q8 33 5 28L0 11L2 4L6 4Z" fill="#4a4c5e" /><path d="M7 8L13 7H19L25 8L28 13L25 19L20 21L22 25L16 30L10 25L12 21L7 19L4 13Z" fill="#fff" /><path d="M8 12L14 13L13 19L16 21L19 19L18 13L24 12L20 15L21 20L16 24L11 20L12 15Z" fill="#4a4c5e" /></svg>
          <span class="bat"><svg width="36" height="30" viewBox="0 0 36 30"><path d="M18 0L18 10L8 26L0 30Z" fill="#ff4a1c" /><path d="M18 0L36 30L28 26L18 10Z" fill="#9e1f63" /><path d="M0 30L8 25H28L36 30Z" fill="#662d91" /></svg><b>1</b></span>
        </div>
      </div>
      <div class="exts">
        <svg width="32" height="32" viewBox="0 0 32 32"><rect width="32" height="32" rx="3" fill="#3a444d" /><circle cx="6" cy="16" r="3" fill="#fff" /><circle cx="14" cy="16" r="3" fill="#fff" /><circle cx="22" cy="16" r="3" fill="#fff" /><path d="M28 10V22" stroke="#ccd" stroke-width="1.500" /></svg>
        <svg width="30" height="32" viewBox="0 0 30 32" fill="none" stroke="#75818c" stroke-width="5"><path d="M20 3.500Q18 2.500 16 2.500A13.500 13.500 0 0 0 16 29.500Q18 29.500 20 28.500M20 13L28 5M20 19L28 27" /><circle cx="16" cy="16" r="3" fill="#75818c" stroke="none" /></svg>
        <svg width="32" height="32" viewBox="0 0 32 32"><path d="M1 2L13 8H19L31 2L29 14L31 22L27 29L20 27L18 30H14L12 27L5 29L1 22L3 14Z" fill="#ea8518" /><path d="M1 2L13 9L10 14L3 16L0 8ZM31 2L19 9L22 14L29 16L32 8Z" fill="#a1503a" /><path d="M10 18L13 20M22 18L19 20" stroke="#a14e22" stroke-width="2" /><path d="M12 25H20L18 30H14Z" fill="#d8c4b4" /><path d="M14 24H18V27H14Z" fill="#111" /></svg>
        <svg width="32" height="32" viewBox="0 0 32 32"><circle cx="16" cy="16" r="16" fill="#f0b25c" /><circle cx="15" cy="15" r="14.500" fill="#ee4f3a" /><circle cx="17" cy="15" r="12" fill="#5cae4a" /><circle cx="16" cy="14" r="9.500" fill="#6cc6e6" /><circle cx="16" cy="13" r="6" fill="#0c1318" /><circle cx="18" cy="10" r="1.800" fill="#fff" /></svg>
        <svg width="32" height="32" viewBox="0 0 32 32"><defs><linearGradient id="cam" x1="0" y1="0" x2=".6" y2="1"><stop offset="0" stop-color="#f7a414" /><stop offset=".4" stop-color="#ee2f78" /><stop offset="1" stop-color="#2aa9f0" /></linearGradient></defs><rect width="32" height="32" rx="5" fill="url(#cam)" /><circle cx="16" cy="16" r="12" fill="#fff" /><circle cx="16" cy="16" r="9.500" fill="#2c3640" /><circle cx="16" cy="16" r="4" fill="#4e6270" /></svg>
        <svg width="32" height="32" viewBox="0 0 32 32"><path d="M31 2L14 14L16 20L26 24L28 12Z" fill="#8b4a24" /><path d="M16 12L26 6L27 13Z" fill="#5f9c26" /><text x="0" y="28" font-family="Lato, sans-serif" font-weight="900" font-size="17" fill="#7cc021">Pdf</text></svg>
        <svg width="30" height="30" viewBox="0 0 30 30" fill="none" stroke="#8a5cf0" stroke-width="3"><circle cx="7" cy="7" r="5" /><path d="M12 6H28V13M22 6V12" /><circle cx="23" cy="23" r="5" /><path d="M18 24H2M2 18V29M8 24V29" /></svg>
        <svg width="18" height="32" viewBox="0 0 18 32"><path d="M2 0L9 12L16 0L14 16L18 28L9 32L0 28L4 16Z" fill="#b9bec4" /><path d="M9 12L14 21L9 32L4 21Z" fill="#000" /></svg>
        <svg width="30" height="30" viewBox="0 0 30 30"><path d="M15 15V1A14 14 0 0 1 27 8Z" fill="#ff2a2a" /><path d="M15 15L27 8A14 14 0 0 1 27 22Z" fill="#e020f0" /><path d="M15 15L27 22A14 14 0 0 1 15 29Z" fill="#2440ff" /><path d="M15 15V29A14 14 0 0 1 3 22Z" fill="#12c8e8" /><path d="M15 15L3 22A14 14 0 0 1 3 8Z" fill="#14b81c" /><path d="M15 15L3 8A14 14 0 0 1 15 1Z" fill="#f4ce10" /><path d="M15 0V4M15 26V30M0 15H4M26 15H30" stroke="#111" stroke-width="2" /></svg>
        <svg width="32" height="32" viewBox="0 0 32 32"><path d="M10 0H22V14H28L16 26L4 14H10Z" fill="#1aa7f5" /><path d="M0 27.500H32V32H0Z" fill="#ed2148" /></svg>
        <svg width="32" height="32" viewBox="0 0 32 32"><path d="M5 32V12Q5 0 15 0Q26 0 26 12V32Q15 29 5 32Z" fill="#4a97df" /><path d="M1 6L4 22M27 22L31 16" stroke="#789" stroke-width="2" /><path d="M9 16Q15 23 21 16M9 9H13M17 9H21" fill="none" stroke="#245b96" stroke-width="1.500" /><circle cx="29" cy="17" r="2.500" fill="#5caf48" /></svg>
        <svg width="32" height="32" viewBox="0 0 32 32"><defs><linearGradient id="pk" x1="0" y1="0" x2=".7" y2="1"><stop offset="0" stop-color="#f6b7b0" /><stop offset=".55" stop-color="#ee6da0" /><stop offset="1" stop-color="#9c4dc4" /></linearGradient></defs><rect width="32" height="32" rx="2" fill="url(#pk)" /></svg>
        <svg width="32" height="22" viewBox="0 0 32 22" fill="none" stroke="#5cc4f5" stroke-width="3"><path d="M2 2H20V20H2ZM20 9L30 2V20L20 13" /></svg>
        <svg width="32" height="32" viewBox="0 0 32 32" fill="none" stroke="#3d4146" stroke-width="1.600"><circle cx="16" cy="16" r="15" /><path d="M15 31L16 13M18 31L17 13" /><path d="M16 12Q9 8 7 15M16 12Q10 14 10 21M16 12Q18 4 12 5M16 12Q24 6 26 13M16 12Q24 14 23 21M16 12Q20 4 23 6" stroke-width="2" /></svg>
        <svg width="31" height="30" viewBox="0 0 31 30" fill="#2f3439"><path d="M2 8H9Q7 1 12.500 1Q18 1 16 8H24V14Q31 12 31 18Q31 24 24 22V29H17Q18 23 13 23Q8 23 9 29H2V22Q8 22 8 18Q8 14 2 14Z" /></svg>
        <svg width="32" height="30" viewBox="0 0 32 30"><rect x="1.500" y="1.500" width="29" height="27" rx="3" fill="none" stroke="#34393f" stroke-width="3" /><rect x="2" y="2" width="10" height="26" fill="#34393f" /></svg>
        <svg width="32" height="27" viewBox="0 0 32 27" fill="none" stroke="#34393f" stroke-width="3"><path d="M25 5V2H5Q2 2 2 5V22Q2 25 5 25H27Q30 25 30 22V9Q30 6 27 6H4M30 12H21Q17 12 17 15.500Q17 19 21 19H30" /></svg>
        <svg width="44" height="44" viewBox="0 0 44 44"><defs><linearGradient id="av" x1="0" y1="0" x2=".5" y2="1"><stop offset="0" stop-color="#b5e4ba" /><stop offset="1" stop-color="#23b768" /></linearGradient></defs><circle cx="22" cy="22" r="22" fill="url(#av)" /><path d="M0 22L22 16L42 10M6 8L22 16L44 28" fill="none" stroke="#f5f8f5" stroke-width="2" /></svg>
        <div class="error">Error<svg width="20" height="26" viewBox="0 0 20 26" stroke="#ef8a16" stroke-width="3"><path d="M0 2H20M0 13H20M0 24H20" /></svg></div>
      </div>
    </div>

    <section class="app">
      <div class="appbar">
        <div class="home"><svg width="34" height="35" viewBox="0 0 34 35" fill="#747577"><path d="M17 0L34 14V31Q34 35 30 35H23V26Q23 24 17 24Q11 24 11 26V35H4Q0 35 0 31V14Z" /></svg></div>
        <div class="logo">{@render icon('flutter', 64, 1.300)}</div>
        <div class="brand"><strong>FlutterFlow</strong><small>v3.0 October 20, 2022 - Flutter 3.3.4</small></div>
        <div class="devices">
          <div class="dev on"><svg width="22" height="36" viewBox="0 0 22 36" fill="none" stroke="#7b7c7e" stroke-width="2.600"><rect x="1.300" y="1.300" width="19.400" height="33.400" rx="4" /><path d="M2 31H20" /></svg></div>
          <svg width="32" height="43" viewBox="0 0 32 43" fill="none" stroke="#3c4147" stroke-width="2.600"><rect x="1.300" y="1.300" width="29.400" height="40.400" rx="5" /><path d="M2 37H30" stroke-width="8" /></svg>
          <svg width="43" height="40" viewBox="0 0 43 40" fill="none" stroke="#3c4147" stroke-width="2.400"><rect x="1.200" y="1.200" width="40.600" height="27" rx="1" /><path d="M2 28H41" stroke-width="5" /><path d="M21.500 30V37M8 38Q21 34 35 38" stroke-width="3" /></svg>
          <div class="size"><span>Canvas Size</span><b>375(px) x 812(px)</b></div>
        </div>
        <div class="find">{@render icon('search', 30, 2.400)}<span>(⌘ + K)</span></div>
        <div class="actions">
          {@render icon('help', 38, 1.700)}
          <div class="pill ver">v1 {@render icon('down', 28, 2.400)}</div>
          <div class="pill"><i class="ok">{@render icon('check', 24, 2.200)}</i>{@render icon('bug', 40, 1.500)}</div>
          <i class="sep"></i>
          <div class="pill"><i class="ok">{@render icon('check', 24, 2.200)}</i>{@render icon('chat', 38, 1.600)}</div>
          <span class="codebtn">{@render icon('code', 37, 1.600)}</span>
          <span class="ext">{@render icon('external', 40, 1.900)}</span>
          <div class="sq orange">{@render icon('eye', 36, 2)}</div>
          <div class="run-btn"><svg width="20" height="36" viewBox="0 0 20 36" fill="#85858b"><path d="M2 0H18L15 13H20L7 36V19H2Z" /></svg><i></i>{@render icon('down', 20, 3.200)}</div>
        </div>
      </div>

      <div class="body">
        <nav class="rail">
          <div class="railhead">Build</div>
          {#each railBuild as r}<div class="rbtn">{@render icon(r, 46, 1.700)}</div>{/each}
          <div class="rbtn"><div class="ractive">{@render icon('pages', 46, 1.600)}</div></div>
          <i class="rline"></i>
          <div class="railhead two">Connect</div>
          {#each railConnect as r}<div class="rbtn">{@render icon(r, 46, 1.700)}</div>{/each}
        </nav>

        <aside class="pages">
          <div class="ptools">
            <div class="seg"><span class="segon">{@render icon('pages', 32, 1.900)}</span><span class="segoff">{@render icon('gem', 36, 1.700)}</span></div>
            <div class="sq line">{@render icon('grid', 32, 1.900)}</div>
            <div class="sq line">{@render icon('folderAdd', 30, 1.900)}</div>
            <div class="sq orange small">{@render icon('pageAdd', 30, 2)}</div>
          </div>
          <div class="psearch"><span>Search for pages...</span>{@render icon('search', 31, 2.600)}</div>
          <div class="prow">
            <span class="grip">{@render icon('burger', 33, 2)}</span>
            <b>HomePage</b>
            <span class="tick">{@render icon('check', 36, 2.200)}</span>
            <svg width="8" height="30" viewBox="0 0 8 30" fill="#303338"><circle cx="4" cy="4" r="3.500" /><circle cx="4" cy="15" r="3.500" /><circle cx="4" cy="26" r="3.500" /></svg>
          </div>
        </aside>
        <div class="gutter"><i></i></div>

        <section class="canvas">
          <div class="ctools">
            <div class="chip cmd">{@render icon('cmd', 40, 1.700)}</div>
            <div class="chip zoom">{@render icon('minus', 28, 2.200)}<b>90%</b>{@render icon('plus', 28, 2.200)}</div>
            <button class="add">{@render icon('plus', 20, 2.600)}Add Widget</button>
            <div class="chip view">
              <svg width="38" height="38" viewBox="0 0 38 38" stroke="#454a51" stroke-width="3" stroke-linecap="round"><circle cx="19" cy="19" r="8" fill="#454a51" stroke="none" /><path d="M19 2V5M19 33V36M2 19H5M33 19H36M7 7L9 9M29 29L31 31M7 31L9 29M29 9L31 7" /></svg>
              <svg width="27" height="43" viewBox="0 0 27 43" fill="none" stroke="#454a51" stroke-width="3"><rect x="1.500" y="1.500" width="24" height="40" rx="4" /><path d="M2 38H25" stroke-width="6" /></svg>
              <svg class="twophones" width="31" height="43" viewBox="0 0 31 43" fill="none" stroke="#454a51" stroke-width="3"><path d="M29 17V4Q29 1.500 26 1.500H4Q1.500 1.500 1.500 4V39Q1.500 41.500 4 41.500H8M10 42V23Q10 20 13 20H29M18 42V28H29V41H18" /></svg>
              <svg width="38" height="28" viewBox="0 0 38 28"><rect width="38" height="28" rx="4" fill="#454a51" /><path d="M6 8H32M6 14H32" stroke="#0a0b0c" stroke-width="3" stroke-dasharray="3 2.700" /><path d="M12 21H26" stroke="#0a0b0c" stroke-width="3" /></svg>
            </div>
          </div>

          <div class="device">
            <span class="tag">HomePage</span>
            <div class="dbar">flutterflow-socket-example</div>
            <div class="dbody"></div>
          </div>
          <div class="side top"><svg width="32" height="14" viewBox="0 0 32 14" fill="none" stroke="#6d6e71" stroke-width="2.500"><rect x="1.200" y="1.200" width="29.600" height="11.600" /><path d="M5 7H8M12 7H21M24 7H27" stroke-width="4" /></svg></div>
          <div class="side bottom"><svg width="30" height="26" viewBox="0 0 30 26" fill="none" stroke="#6d6e71" stroke-width="2.600"><rect x="1.300" y="1.300" width="27.400" height="23.400" rx="3" /><path d="M6 19H24" stroke-width="4" /></svg></div>
        </section>

        <aside class="props">
          <div class="prop head">Page Parameters {@render icon('info', 29, 1.900)}<span class="end">{@render icon('plus', 30, 1.700)}</span></div>
          <div class="prop head second">Route Settings {@render icon('info', 29, 1.900)}<span class="end">{@render icon('right', 27, 2.400)}</span></div>
          <div class="inspector">
            <div class="scaffold">
              <div class="names">
                <div class="kind"><svg width="18" height="28" viewBox="0 0 18 28" fill="none" stroke="#737476" stroke-width="3"><rect x="1.500" y="1.500" width="15" height="25" rx="2.500" /><path d="M2 23H16" stroke-width="5" /></svg>Scaffold</div>
                <div class="pname">HomePage {@render icon('pencil', 30, 1.700)}</div>
              </div>
              <div class="sbtn">{@render icon('copy', 37, 1.900)}</div>
              <div class="sbtn">{@render icon('trash', 34, 2.200)}</div>
            </div>
            <div class="tabs">
              <span class="tabon">{@render icon('design', 46, 1.900)}</span>
              <span class="ta">{@render icon('flow', 40, 1.800)}</span>
              <span class="tb">{@render icon('db', 42, 1.600)}</span>
              <span class="tc"><svg width="22" height="27" viewBox="0 0 22 27" fill="#454a50"><path d="M0 0L22 13.500L0 27Z" /></svg></span>
            </div>
            <div class="row title">Page (Scaffold) Properties {@render icon('info', 26, 1.900)}<span class="end">{@render icon('down', 29, 2.200)}</span></div>
            <div class="row bg">Background Color</div>
            <div class="select">Primary<i></i></div>
            <div class="row tall first">Safe Area {@render icon('info', 26, 1.900)}<span class="toggle on"></span></div>
            <div class="row tall">Hide Keyboard on Tap {@render icon('info', 26, 1.900)}<span class="toggle on"></span></div>
            <div class="row title nav2">Nav Bar Item Properties {@render icon('info', 26, 1.900)}<span class="end">{@render icon('down', 29, 2.200)}</span></div>
            <div class="row tall">Show on Nav Bar<span class="toggle"></span></div>
            <div class="row tall">Always Show Nav Bar on Page {@render icon('info', 26, 1.900)}<span class="toggle dim"></span></div>
          </div>
        </aside>
      </div>
    </section>
  </main>

  <div class="fab"></div>

  <section class="modal">
    <div class="mhead">
      <div><h1>Git Commit Message</h1><p>Enter a message for this commit.</p></div>
      <button class="mclose" aria-label="Close">{@render icon('close', 40, 2.200)}</button>
    </div>
    <div class="mlabel">Message</div>
    <div class="field"><span>{message}</span><i class="caret"></i>
      <svg class="gram" width="48" height="48" viewBox="0 0 48 48"><circle cx="24" cy="24" r="24" fill="#15c39a" /><path d="M34 15A13.500 13.500 0 1 0 37 27H28M37 26V35" fill="none" stroke="#fff" stroke-width="3" /></svg>
    </div>
    <button class="push">Push</button>
  </section>

  <section class="devmenu">
    <div class="dhead"><div><h2>Developer Menu</h2><p>Choose from the options below.</p></div>{@render icon('close', 43, 2.100)}</div>
    {#each devItems as item}
      <div class="ditem">
        <span class="dic">
          {#if item.icon === 'github'}{@render github()}{:else if item.icon === 'apk'}{@render apk()}{:else}{@render icon(item.icon, 43, 1.900)}{/if}
        </span>{item.label}
      </div>
    {/each}
  </section>

  <svg class="cursor" width="26" height="38" viewBox="0 0 26 38"><path d="M2 2V31L9 25L14 36L20 33L15 23H24Z" fill="#000" stroke="#e8e8e8" stroke-width="2.500" /></svg>

  <footer class="dock">
    {@render dockSlots(dockLeft)}
    <i class="dsep"></i>
    {@render dockSlots(dockMiddle)}
    <i class="dsep late"></i>
    {@render dockSlots(dockRight)}
  </footer>
</div>

<style>
  :global(body) { margin: 0; background: #08001a; }
  * { box-sizing: border-box; }
  i { font-style: normal; }
  svg { display: block; flex: none; overflow: visible; }
  h1, h2, p { margin: 0; }
  button { border: 0; padding: 0; font: inherit; color: inherit; display: flex; align-items: center; justify-content: center; }

  .desktop { position: relative; width: 3584px; height: 2240px; overflow: hidden; display: flex; flex-direction: column; font-family: Lato, sans-serif; background: linear-gradient(90deg, #0c0022 0%, #100028 40%, #2a0060 65%, #3f0063 70%, #2b005c 77%, #16003c 84%, #14003a 100%); white-space: nowrap; }

  .menubar { height: 50px; border-bottom: 2px solid #0a0020; display: flex; justify-content: space-between; background: linear-gradient(90deg, #56029a 0%, #5200a4 14%, #4100bc 34%, #3a00c6 52%, #3500c2 75%, #3503ae 100%); font-family: Inter, sans-serif; font-size: 25.500px; font-weight: 500; color: #ece6fa; }
  .menus { display: grid; align-items: center; grid-template-columns: 67px 114px 84px 88px 99px 129px 176px 123px 85px 137px 80px; padding-left: 40px; padding-bottom: 3px; }
  .menus b { font-weight: 700; }
  .apple { margin-top: -2px; }
  .status { width: 1542px; display: grid; align-items: center; justify-items: start; grid-template-columns: 72px 66px 68px 84px 70px 63px 66px 79px 69px 74px 66px 71px 88px 71px 64px 52px 40px 33px 61px 1fr; }
  .status time { letter-spacing: 0; padding-bottom: 4px; }

  .window { height: 2020px; border-radius: 20px; overflow: hidden; background: #0d1112; display: flex; flex-direction: column; box-shadow: 0 0 60px #000; }
  .tabstrip { height: 76px; background: #d5d9dc; border-top: 2px solid #eceeef; display: flex; font-family: Inter, sans-serif; color: #3b4046; }
  .lights { display: flex; gap: 16px; padding: 25px 0 0 42px; width: 179px; }
  .lights i { width: 24px; height: 24px; border-radius: 50%; }
  .red { background: #fe5f57; } .yellow { background: #febc2e; } .green { background: #28c840; }
  .tab { width: 479px; margin-top: 14px; background: #f3f3f3; border-radius: 12px 12px 0 0; display: flex; align-items: center; padding: 0 11px 0 14px; }
  .fav { color: #4b39ef; margin-right: 16px; }
  .tabtitle { flex: 1; font-size: 23.600px; font-weight: 500; }
  .newtab { padding: 30px 0 0 31px; }
  .tabsearch { margin-left: auto; padding: 34px 30px 0 0; }

  .toolbar { height: 74px; background: #f3f3f3; border-bottom: 2px solid #cfd0d1; display: flex; align-items: center; font-family: Inter, sans-serif; }
  .nav { width: 593px; padding-left: 34px; display: grid; grid-template-columns: 63px 61px 379px 22px; }
  .address { width: 1475px; height: 56px; border-radius: 8px; background: #fff; display: flex; align-items: center; padding-left: 26px; }
  .url { margin-left: 23px; font-size: 27.200px; letter-spacing: .35px; color: #6a6d70; }
  .url em { font-style: normal; color: #2a2d31; }
  .addricons { margin-left: auto; display: flex; align-items: center; }
  .vline { width: 2px; height: 32px; background: #c4c5c7; margin: 0 22px 0 23px; }
  .bat { position: relative; margin: 0 18px 0 35px; }
  .bat b { position: absolute; left: 25px; top: -7px; width: 25px; height: 25px; border-radius: 10px; background: #fb4a23; color: #fff; font-size: 18px; font-weight: 500; display: flex; align-items: center; justify-content: center; }
  .exts { margin-left: 216px; display: grid; align-items: center; justify-items: start; grid-template-columns: 66px 62px 64px 64px 64px 65px 70px 59px 62px 64px 64px 64px 64px 66px 62px 68px 62px 58px 136px; }
  .error { width: 136px; height: 56px; border: 3px solid #26282b; border-radius: 9px; background: #ececec; font-size: 24px; color: #2c2f33; display: flex; align-items: center; justify-content: space-between; padding: 0 15px 0 14px; }

  .app { flex: 1; display: flex; flex-direction: column; color: #454a51; font-weight: 700; border-bottom: 2px solid #26282a; }
  .appbar { height: 122px; background: #090a0c; border-bottom: 2px solid #0e1113; display: flex; align-items: center; flex: none; }
  .home { width: 123px; height: 120px; border-right: 3px solid #0e1113; display: flex; align-items: center; justify-content: center; }
  .logo { color: #261c80; margin: -28px 0 0 25px; width: 72px; }
  .brand { width: 419px; display: flex; flex-direction: column; }
  .brand strong { font-size: 51px; line-height: 50px; color: #747577; font-weight: 900; margin-top: -2px; }
  .brand small { font-size: 21.500px; line-height: 28px; color: #34383b; margin: 15px 0 0 1px; letter-spacing: .1px; }
  .devices { width: 448px; height: 80px; border-radius: 18px; background: #0d1012; display: grid; grid-template-columns: 93px 67px 89px 1fr; align-items: center; padding: 0 2px; }
  .dev { width: 74px; height: 72px; border-radius: 16px; background: #040405; display: flex; align-items: center; justify-content: center; }
  .size { display: flex; flex-direction: column; gap: 9px; font-size: 22px; line-height: 27px; font-weight: 500; color: #34383c; margin-top: -4px; }
  .size b { color: #6d6f72; font-weight: 500; letter-spacing: .45px; }
  .find { margin-left: 36px; display: flex; align-items: center; gap: 24px; font-size: 29px; letter-spacing: .5px; font-weight: 400; color: #3d4145; }
  .actions { margin-left: auto; display: flex; align-items: center; color: #75777a; padding-right: 32px; }
  .pill { width: 122px; height: 64px; border: 2px solid #14171a; border-radius: 32px; display: flex; align-items: center; gap: 16px; padding-left: 8px; margin-left: 17px; }
  .ver { width: 104px; margin-left: 33px; padding-left: 17px; font-size: 28px; font-weight: 400; gap: 12px; }
  .ok { width: 42px; height: 42px; border-radius: 50%; background: #1c6353; color: #8e9492; display: flex; align-items: center; justify-content: center; }
  .sep { width: 2px; height: 80px; background: #14171a; margin-left: 17px; }
  .codebtn { margin-left: 35px; } .ext { margin-left: 48px; margin-right: 36px; }
  .sq { width: 68px; height: 68px; border-radius: 14px; display: flex; align-items: center; justify-content: center; }
  .orange { background: #6c402c; color: #8f8a86; }
  .line { border: 2px solid #15181b; color: #4a4f55; }
  .run-btn { margin-left: 24px; width: 120px; height: 68px; border-radius: 14px; background: #251b72; color: #8b8b93; display: flex; align-items: center; padding-left: 30px; }
  .run-btn i { width: 2px; height: 56px; background: #0d0b25; margin: 0 15px 0 18px; }

  .body { flex: 1; display: flex; }
  .rail { width: 121px; background: #090a0c; display: flex; flex-direction: column; align-items: center; padding-right: 1px; }
  .railhead { height: 87px; padding-top: 40px; font-size: 20px; line-height: 26px; }
  .two { height: 90px; padding-top: 42px; letter-spacing: .5px; }
  .rbtn { height: 124px; display: flex; align-items: center; justify-content: center; }
  .ractive { width: 82px; height: 80px; border-radius: 16px; background: #251b72; color: #8a8a8c; display: flex; align-items: center; justify-content: center; }
  .rline { width: 112px; height: 2px; background: #15181b; margin-top: 23px; }

  .pages { width: 603px; border-left: 3px solid #0b0e0f; }
  .ptools { height: 106px; border-bottom: 2px solid #090b0c; display: flex; align-items: flex-start; padding: 19px 0 0 25px; gap: 16px; }
  .seg { width: 171px; height: 72px; margin: -2px 132px 0 0; border-radius: 15px; background: #15191c; display: grid; grid-template-columns: 84px 1fr; padding: 4px 3px; }
  .segon { background: #020203; color: #8a8b8d; border-radius: 14px; display: flex; align-items: center; justify-content: center; }
  .segoff { display: flex; align-items: center; padding-left: 26px; }
  .psearch { height: 87px; border-bottom: 2px solid #0a0c0d; display: flex; align-items: center; justify-content: space-between; padding: 0 33px 0 40px; font-size: 26px; font-weight: 500; }
  .prow { height: 71px; background: #15181c; border-left: 6px solid #6c402c; display: grid; grid-template-columns: 51px 412px 75px 8px; align-items: center; padding-left: 18px; color: #454a51; }
  .prow b { font-size: 26px; color: #747577; letter-spacing: .2px; }
  .tick { color: #80492f; }
  .gutter { width: 20px; background: #14171b; display: flex; padding: 845px 4px 0 6px; }
  .gutter i { width: 10px; height: 60px; border-radius: 5px; background: #3a3f46; }

  .canvas { position: relative; width: 2221px; }
  .ctools { display: flex; padding: 41px 29px 0 28px; }
  .chip { height: 72px; border-radius: 15px; background: #090a0b; display: flex; align-items: center; justify-content: center; color: #77787a; }
  .cmd { width: 72px; }
  .zoom { width: 239px; margin: 0 24px 0 25px; display: grid; grid-template-columns: 58px 111px 28px; justify-content: start; padding: 0 15px 0 28px; }
  .zoom b { font-size: 32px; font-weight: 900; letter-spacing: .3px; }
  .add { width: 300px; height: 72px; border-radius: 15px; background: #251b72; color: #77767f; gap: 21px; font-size: 31px; }
  .view { width: 304px; margin-left: auto; justify-content: space-between; padding: 0 21px; }
  .twophones { margin: 0 -3px 0 3px; }
  .device { position: absolute; left: 773px; top: 161px; width: 675px; height: 1463px; border: 5px solid #124a40; display: flex; flex-direction: column; }
  .tag { position: absolute; left: -3px; top: -4px; height: 35px; width: 120px; background: #154f42; color: #6f9088; font-size: 22px; line-height: 34px; padding-left: 7px; font-weight: 500; }
  .dbar { height: 175px; background: #251b72; color: #8c8b95; font-size: 44px; line-height: 54px; padding: 95px 0 0 21px; letter-spacing: 1.130px; border-bottom: 1px solid #4c4b58; }
  .dbody { flex: 1; background: linear-gradient(#6f6f71 0 79px, #69696b 79px, #646466 127px, #59595b 815px, #69696b 927px, #707072 927px); }
  .side { position: absolute; left: 1476px; width: 58px; height: 59px; border-radius: 15px; background: #15181c; display: flex; align-items: center; justify-content: center; }
  .top { top: 162px; } .bottom { top: 1563px; }

  .props { width: 619px; font-size: 26px; display: flex; flex-direction: column; }
  .prop { height: 83px; padding: 0 31px 0 29px; display: flex; align-items: center; gap: 20px; font-size: 28px; letter-spacing: .4px; border-bottom: 2px solid #15181b; }
  .second { height: 81px; }
  .end { margin-left: auto; }
  .inspector { flex: 1; background: #090a0c; padding-left: 29px; display: flex; flex-direction: column; }
  .scaffold { height: 126px; display: flex; padding-right: 24px; gap: 18px; }
  .names { flex: 1; padding-top: 21px; }
  .kind { height: 32px; display: flex; align-items: center; gap: 19px; padding-left: 6px; color: #747577; letter-spacing: .3px; }
  .pname { margin-top: 6px; height: 50px; display: flex; align-items: center; gap: 26px; font-size: 32px; font-weight: 400; color: #3a3d40; }
  .sbtn { margin-top: 33px; width: 64px; height: 63px; border: 2px solid #131619; border-radius: 16px; background: #0c0f11; color: #737476; display: flex; align-items: center; justify-content: center; }
  .tabs { width: 566px; height: 71px; border-radius: 15px; background: #0d1011; display: grid; grid-template-columns: 134px 146px 142px 140px; align-items: center; padding: 0 4px; }
  .tabs span { display: flex; justify-content: center; }
  .tabon { height: 64px; align-items: center; border-radius: 15px; background: #020203; color: #808183; }
  .row { height: 50px; display: flex; align-items: center; gap: 13px; padding-right: 24px; font-weight: 500; font-size: 25.700px; color: #42474d; flex: none; }
  .row > :global(.ic) { color: #34383c; }
  .bg { letter-spacing: .3px; }
  .title { margin: 25px 0 1px; color: #747577; gap: 21px; font-weight: 700; font-size: 26px; letter-spacing: .15px; }
  .title .end { color: #5a5f65; margin-right: 2px; }
  .select { width: 260px; height: 68px; margin-top: 3px; border: 2px solid #16191c; border-radius: 15px; display: flex; align-items: center; justify-content: space-between; padding: 0 30px; font-size: 24px; color: #747577; }
  .select i { width: 24px; height: 24px; border-radius: 5px; background: #6f7072; }
  .tall { height: 72px; }
  .first { margin-top: 11px; }
  .toggle { width: 84px; height: 48px; border-radius: 24px; border: 2px solid #101315; margin-left: auto; display: flex; align-items: center; padding: 0 2px; }
  .toggle::after { content: ''; width: 44px; height: 44px; border-radius: 50%; background: #101417; }
  .toggle.on { background: #251b72; border-color: #251b72; justify-content: flex-end; padding: 0; }
  .toggle.on::after { background: #6f6e70; }
  .toggle.dim::after { background: #0e1113; }
  .nav2 { margin: 10px 0 0 -29px; height: 66px; padding: 12px 24px 0 29px; border-top: 2px solid #15181b; }

  .fab { position: absolute; left: 3424px; top: 1910px; width: 119px; height: 119px; border-radius: 50%; background: #4b3eef; }

  .modal { position: absolute; left: 1092px; top: 790px; width: 1400px; height: 689px; background: #0e1112; border-radius: 16px; padding: 98px 60px 0 60px; display: flex; flex-direction: column; box-shadow: 0 50px 50px -20px rgba(6, 7, 9, .4), 0 0 30px 2px rgba(6, 8, 9, .35); color: #fff; }
  .mhead { display: flex; justify-content: space-between; align-items: flex-start; }
  .mhead h1 { font-size: 72px; line-height: 84px; font-weight: 700; margin-top: 12px; letter-spacing: 1.700px; -webkit-text-stroke: 1.200px #fff; }
  .mhead p { font-size: 31px; line-height: 36px; margin-top: 17px; color: #77808a; font-weight: 400; letter-spacing: .480px; }
  .mclose { width: 88px; height: 88px; border-radius: 50%; background: #2e363d; color: #fff; }
  .mlabel { font-size: 27px; line-height: 32px; margin-top: 43px; font-weight: 600; color: #8f99a4; letter-spacing: .6px; }
  .field { position: relative; height: 160px; width: 1280px; margin-top: 21px; background: #15181c; border: 2px solid #31373e; border-radius: 16px; display: flex; padding: 1px 0 0 32px; font-size: 27.200px; line-height: 38px; font-weight: 500; }
  .caret { width: 4px; height: 36px; background: #2b8fea; }
  .gram { position: absolute; right: 16px; bottom: 18px; }
  .push { align-self: flex-end; width: 200px; height: 88px; margin-top: 20px; border-radius: 15px; background: #463eea; color: #fff; font-size: 31px; font-weight: 700; letter-spacing: .7px; padding-bottom: 2px; }

  .devmenu { position: absolute; left: 1556px; top: 316px; width: 540px; color: #fff; }
  .dhead { height: 146px; border-radius: 18px 18px 0 0; background: #15181c; border-bottom: 2px solid #2c3238; display: flex; justify-content: space-between; padding: 19px 19px 0 32px; }
  .dhead h2 { font-size: 32px; line-height: 38px; margin-top: 13px; font-weight: 700; letter-spacing: .1px; }
  .dhead p { font-size: 24px; line-height: 30px; margin-top: 11px; font-weight: 700; letter-spacing: .3px; color: #8a949f; }
  .ditem { height: 110px; background: #101213; border-bottom: 2px solid #2c3238; display: flex; align-items: center; padding-left: 33px; font-size: 28px; font-weight: 700; letter-spacing: .2px; }
  .ditem:last-child { border: 0; background: none; height: 108px; }
  .dic { width: 63px; letter-spacing: 0; }

  .cursor { position: absolute; left: 599px; top: 1150px; }

  .dock { position: absolute; left: 228px; top: 2072px; width: 3128px; height: 158px; border: 2px solid #8a7ba6; border-radius: 46px; background: radial-gradient(ellipse 620px 260px at 2180px 130px, #a24cc4, rgba(140, 80, 180, 0)), linear-gradient(90deg, #5e5478 0%, #645586 30%, #68539a 52%, #74509c 62%, #8d51ad 74%, #6f55a0 88%, #5f567c 100%); display: flex; padding-left: 4px; }
  .slot { position: relative; width: 136px; display: flex; align-items: center; justify-content: center; padding-bottom: 10px; }
  .run { position: absolute; bottom: 3px; left: 64px; width: 8px; height: 8px; border-radius: 50%; background: #0d0518; }
  .badge { position: absolute; right: 3px; top: 9px; width: 48px; height: 48px; border-radius: 50%; background: #fb4339; color: #fff; font-family: Inter, sans-serif; font-size: 24px; display: flex; align-items: center; justify-content: center; }
  .dsep { width: 2px; height: 118px; background: #47127c; margin: 18px 28px 0 32px; }
  .late { margin: 18px 31px 0 29px; background: #3a1c66; }
</style>
